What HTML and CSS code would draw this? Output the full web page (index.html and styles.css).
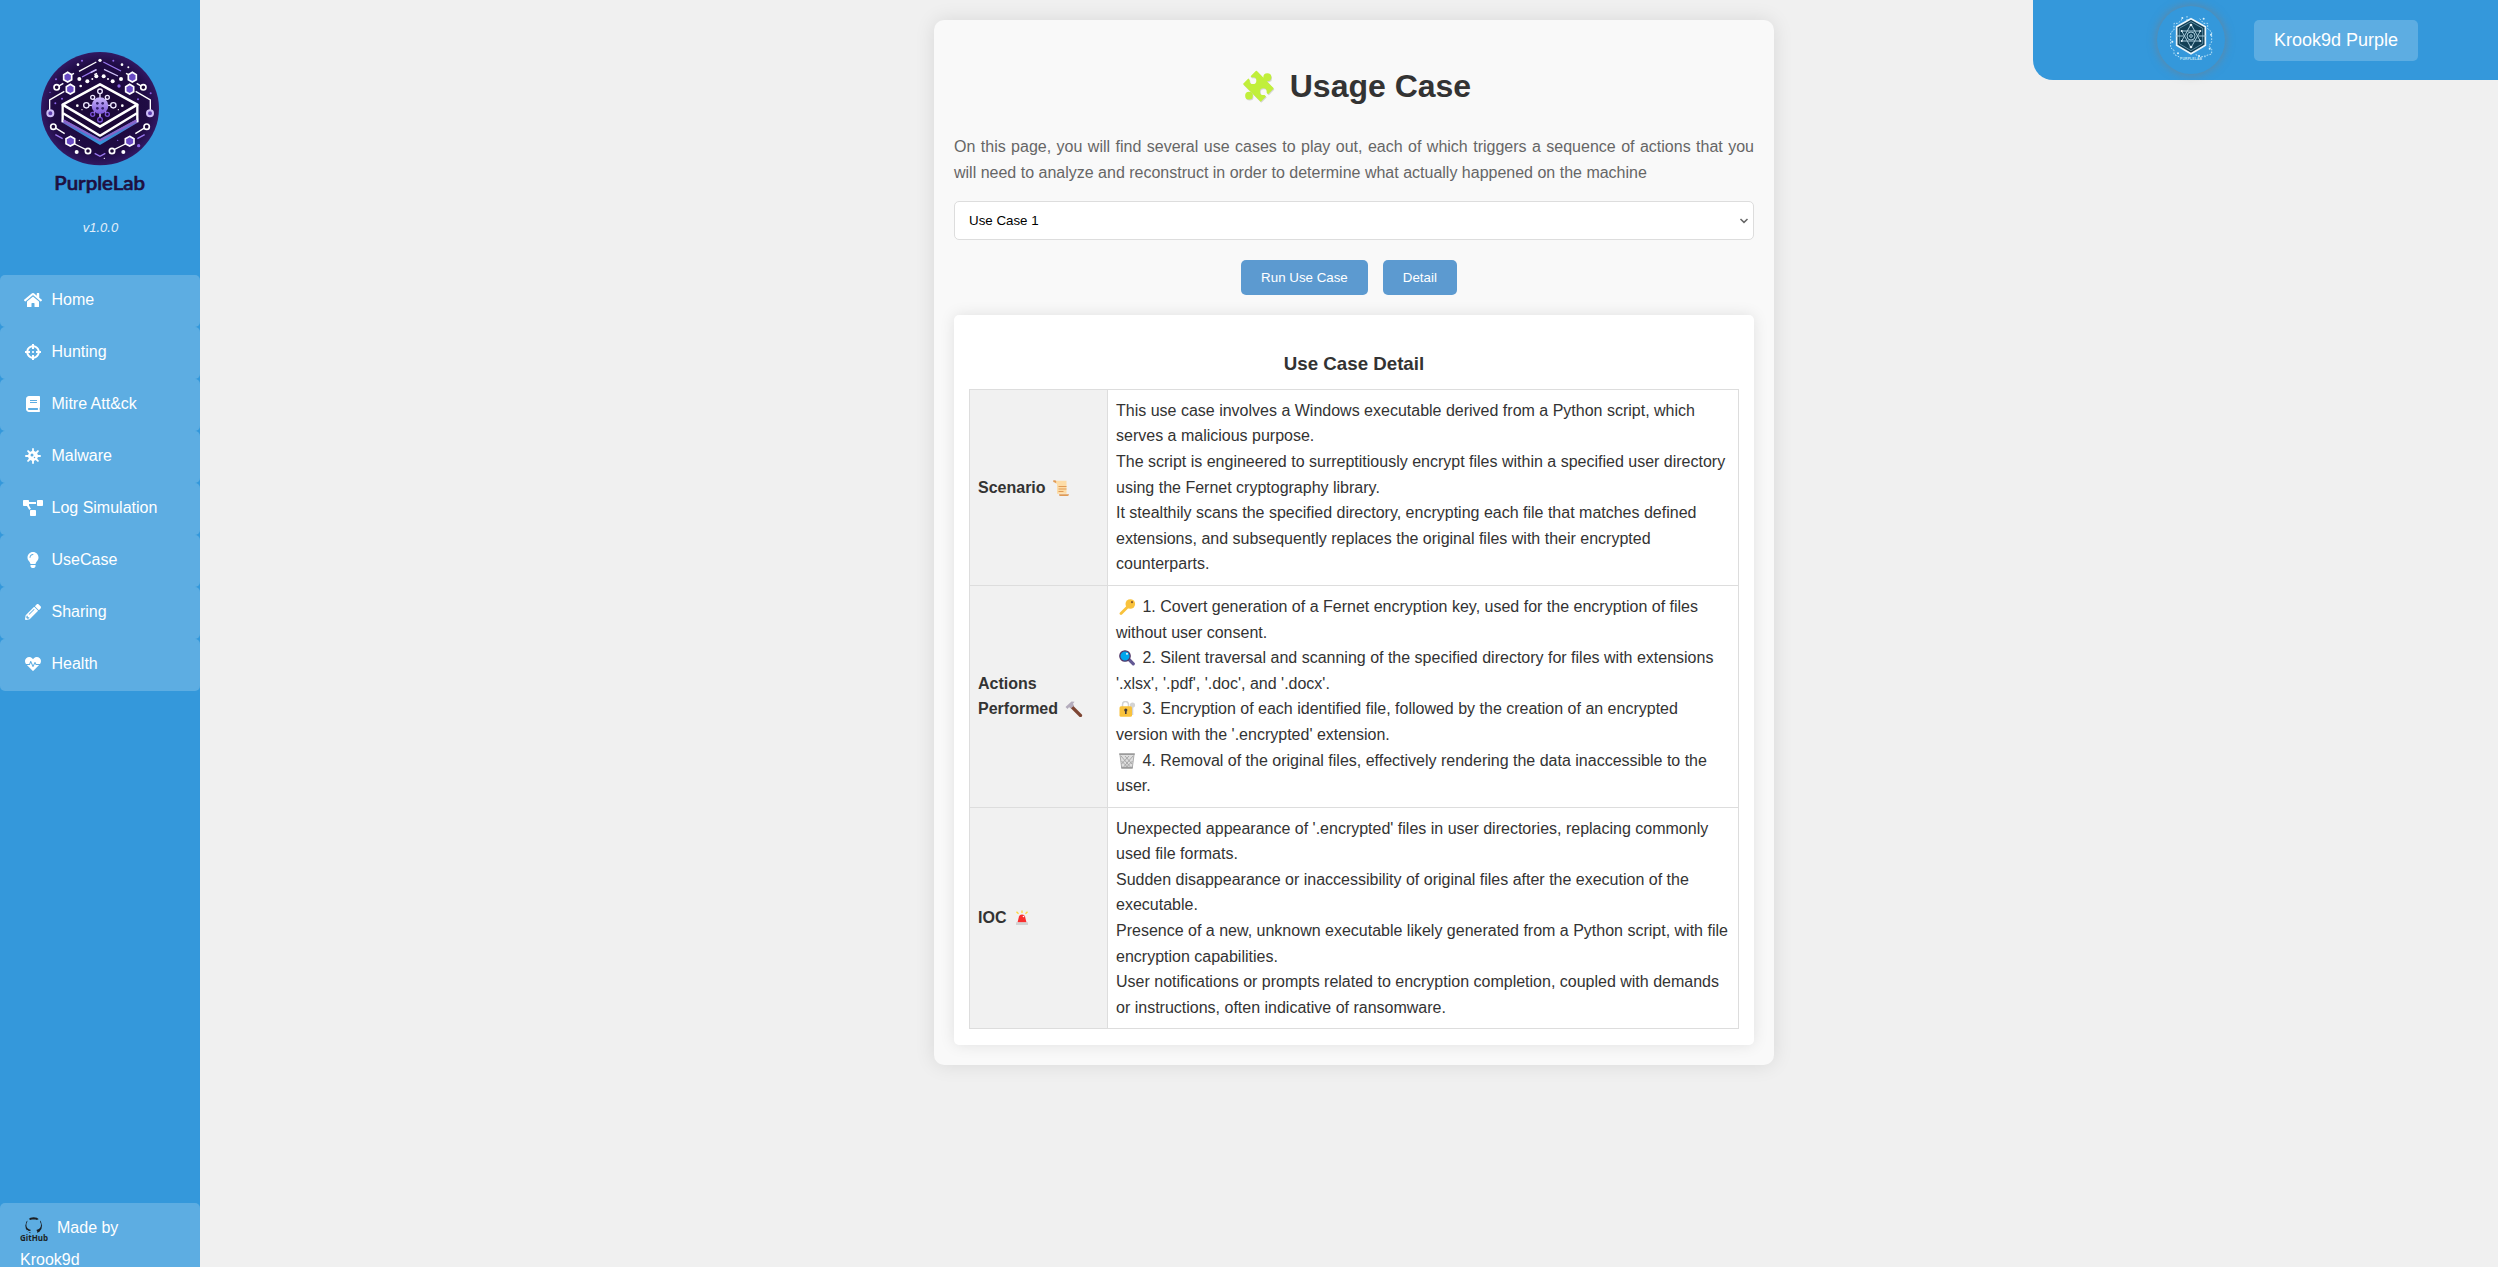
FILE: index.html
```html
<!DOCTYPE html>
<html lang="en">
<head>
<meta charset="utf-8">
<title>PurpleLab - Usage Case</title>
<link rel="stylesheet" href="styles.css">
</head>
<body>
<div class="app">
  <nav class="sidebar">
    <svg class="logo" viewBox="0 0 600 510">
      <defs>
        <radialGradient id="disc"><stop offset="0" stop-color="#190736"/><stop offset=".8" stop-color="#1f0b44"/><stop offset="1" stop-color="#311862"/></radialGradient>
        <linearGradient id="virus" x1="0" y1="0" x2="0" y2="1"><stop offset="0" stop-color="#c9b6f8"/><stop offset="1" stop-color="#7c55dc"/></linearGradient>
        <linearGradient id="layer" x1="0" y1="0" x2="0" y2="1"><stop offset="0" stop-color="#8a63cf"/><stop offset=".5" stop-color="#3f7fd0"/><stop offset="1" stop-color="#3498db"/></linearGradient>
      </defs>
      <ellipse cx="300" cy="236" rx="177" ry="170" fill="url(#disc)"/>
      <g fill="none" stroke="#fff" stroke-width="4">
        <path d="M237 124l52-28M283 134l8-4M170 172l20-12M430 172l-20-12M149 250v-40l44-26M451 250v-40l-44-26M160 290l34 21M440 290l-34 21M224 342l40 20M376 342l-40 20M214 134l8-4M386 134l-8-4"/>
        <path stroke="#9a78ee" d="M310 96l53 27M246 141l42-22M166 314l22 12M434 314l-22 12M284 370l16 9l16-9"/>
        <path stroke="#d3c6fa" d="M312 118l42 20M272 128l18-9"/>
      </g>
      <g fill="#6a4bc4" stroke="#fff" stroke-width="5">
        <path d="M203 127l12 7v15l-12 7l-12-7v-15zM397 127l12 7v15l-12 7l-12-7v-15zM211 163l12 7v15l-12 7l-12-7v-15zM389 163l12 7v15l-12 7l-12-7v-15zM211 319l13 7v15l-13 7l-13-7v-15zM389 319l13 7v15l-13 7l-13-7v-15z"/>
      </g>
      <g fill="#1b0838" stroke="#fff" stroke-width="5">
        <circle cx="170" cy="172" r="8"/><circle cx="430" cy="172" r="8"/>
        <circle cx="160" cy="290" r="8"/><circle cx="440" cy="290" r="8"/>
        <circle cx="264" cy="363" r="8"/><circle cx="336" cy="363" r="8"/>
      </g>
      <g fill="#6040b0" stroke="#cdbdf8" stroke-width="6"><circle cx="151" cy="250" r="9"/><circle cx="450" cy="250" r="9"/></g>
      <g fill="#fff">
        <circle cx="300" cy="91" r="5"/><circle cx="234" cy="104" r="4"/><circle cx="366" cy="104" r="4"/><circle cx="238" cy="147" r="6"/><circle cx="363" cy="147" r="6"/><circle cx="262" cy="154" r="6"/><circle cx="338" cy="154" r="6"/><circle cx="289" cy="139" r="6"/><circle cx="311" cy="139" r="6"/><circle cx="277" cy="147" r="3"/><circle cx="324" cy="147" r="3"/><circle cx="242" cy="168" r="4"/><circle cx="230" cy="366" r="6"/><circle cx="370" cy="366" r="6"/><circle cx="385" cy="112" r="3"/><circle cx="313" cy="385" r="2"/><circle cx="238" cy="331" r="2"/>
      </g>
      <g fill="#8b66e8"><circle cx="246" cy="92" r="3"/><circle cx="340" cy="92" r="3"/><circle cx="357" cy="168" r="5"/><circle cx="168" cy="148" r="3"/><circle cx="452" cy="190" r="3"/><circle cx="150" cy="187" r="2"/><circle cx="186" cy="206" r="3"/><circle cx="414" cy="208" r="3"/><circle cx="416" cy="347" r="5"/><circle cx="353" cy="331" r="2"/><circle cx="166" cy="220" r="3"/></g>
      <path fill="url(#layer)" d="M185 265l115 62l115-62v12l-115 68l-115-68z"/>
      <path d="M300 163l112 61v25l-112 66l-112-66v-25z" fill="#1b0838"/>
      <g fill="none" stroke="#fff" stroke-width="8" stroke-linejoin="round">
        <path d="M300 163l112 61l-112 66l-112-66z"/><path stroke-width="7" d="M188 224v53M412 224v53M188 249l112 68l112-68"/>
      </g>
      <path d="M190 271l110 60l110-60" fill="none" stroke="#8b63c9" stroke-width="6"/>
      <g stroke="#eee8ff" stroke-width="4" fill="#1b0838">
        <path d="M300 226v-40M300 226h40M300 226h-40M300 226v40M300 226l-22-23M300 226l22-23M300 226l-22 26M300 226l22 26"/>
        <circle cx="300" cy="184" r="7"/><circle cx="340" cy="226" r="8"/><circle cx="259" cy="226" r="8"/><circle cx="278" cy="202" r="6"/><circle cx="322" cy="202" r="6"/>
        <g stroke="#7a50d8"><circle cx="300" cy="269" r="7"/><circle cx="278" cy="253" r="6"/><circle cx="322" cy="253" r="6"/></g>
      </g>
      <circle cx="300" cy="227" r="25" fill="url(#virus)"/>
      <g fill="#33206c"><circle cx="292" cy="220" r="4"/><circle cx="308" cy="220" r="4"/><circle cx="292" cy="235" r="4"/><circle cx="308" cy="235" r="4"/></g>
      <g fill="#fff"><circle cx="232" cy="227" r="4"/><circle cx="367" cy="227" r="4"/><circle cx="246" cy="239" r="2"/><circle cx="355" cy="239" r="2"/></g>
      <text class="logo-name" x="163" y="479" textLength="272" lengthAdjust="spacingAndGlyphs">PurpleLab</text>
    </svg>
    <p class="version">v1.0.0</p>
    <ul class="menu">
      <li><svg class="icon" viewBox="0 0 576 512"><path d="M280.37 148.26L96 300.11V464a16 16 0 0 0 16 16l112.06-.29a16 16 0 0 0 15.92-16V368a16 16 0 0 1 16-16h64a16 16 0 0 1 16 16v95.64a16 16 0 0 0 16 16.05L464 480a16 16 0 0 0 16-16V300L295.67 148.26a12.19 12.19 0 0 0-15.3 0zM571.6 251.47L488 182.56V44.05a12 12 0 0 0-12-12h-56a12 12 0 0 0-12 12v72.61L318.47 43a48 48 0 0 0-61 0L4.34 251.47a12 12 0 0 0-1.6 16.9l25.5 31A12 12 0 0 0 45.15 301l235.22-193.74a12.19 12.19 0 0 1 15.3 0L530.9 301a12 12 0 0 0 16.9-1.6l25.5-31a12 12 0 0 0-1.7-16.93z"/></svg>Home</li>
      <li><svg class="icon" viewBox="0 0 512 512"><path d="M500 224h-30.364C455.724 130.325 381.675 56.276 288 42.364V12c0-6.627-5.373-12-12-12h-40c-6.627 0-12 5.373-12 12v30.364C130.325 56.276 56.276 130.325 42.364 224H12c-6.627 0-12 5.373-12 12v40c0 6.627 5.373 12 12 12h30.364C56.276 381.675 130.325 455.724 224 469.636V500c0 6.627 5.373 12 12 12h40c6.627 0 12-5.373 12-12v-30.364C381.675 455.724 455.724 381.675 469.636 288H500c6.627 0 12-5.373 12-12v-40c0-6.627-5.373-12-12-12zM288 404.634V364c0-6.627-5.373-12-12-12h-40c-6.627 0-12 5.373-12 12v40.634C165.826 392.232 119.783 346.243 107.366 288H148c6.627 0 12-5.373 12-12v-40c0-6.627-5.373-12-12-12h-40.634C119.768 165.826 165.757 119.783 224 107.366V148c0 6.627 5.373 12 12 12h40c6.627 0 12-5.373 12-12v-40.634C346.174 119.768 392.217 165.757 404.634 224H364c-6.627 0-12 5.373-12 12v40c0 6.627 5.373 12 12 12h40.634C392.232 346.174 346.243 392.217 288 404.634zM288 256c0 17.673-14.327 32-32 32s-32-14.327-32-32c0-17.673 14.327-32 32-32s32 14.327 32 32z"/></svg>Hunting</li>
      <li><svg class="icon" viewBox="0 0 448 512"><path d="M448 360V24c0-13.3-10.7-24-24-24H96C43 0 0 43 0 96v320c0 53 43 96 96 96h328c13.3 0 24-10.7 24-24v-16c0-7.5-3.5-14.3-8.9-18.7-4.2-15.4-4.2-59.3 0-74.7 5.4-4.3 8.9-11.1 8.9-18.6zM128 134c0-3.3 2.7-6 6-6h212c3.3 0 6 2.7 6 6v20c0 3.3-2.7 6-6 6H134c-3.3 0-6-2.7-6-6v-20zm0 64c0-3.3 2.7-6 6-6h212c3.3 0 6 2.7 6 6v20c0 3.3-2.7 6-6 6H134c-3.3 0-6-2.7-6-6v-20zm253.4 250H96c-17.7 0-32-14.3-32-32 0-17.6 14.4-32 32-32h285.4c-1.9 17.1-1.9 46.9 0 64z"/></svg>Mitre Att&amp;ck</li>
      <li><svg class="icon" viewBox="0 0 512 512"><path fill-rule="evenodd" d="M256 96a160 160 0 1 0 0 320a160 160 0 1 0 0-320zM224 176a48 48 0 1 1 0 96a48 48 0 1 1 0-96zM304 280a24 24 0 1 1 0 48a24 24 0 1 1 0-48z"/><path fill="none" stroke="#fff" stroke-width="58" stroke-linecap="round" d="M256 30v90M256 392v90M30 256h90M392 256h90M98 98l70 70M344 344l70 70M98 414l70-70M344 168l70-70"/></svg>Malware</li>
      <li><svg class="icon" viewBox="0 0 640 512"><path d="M384 320H256c-17.67 0-32 14.33-32 32v128c0 17.67 14.33 32 32 32h128c17.67 0 32-14.33 32-32V352c0-17.67-14.33-32-32-32zM192 32c0-17.67-14.33-32-32-32H32C14.33 0 0 14.33 0 32v128c0 17.67 14.33 32 32 32h95.72l73.16 128.04C211.98 300.98 232.4 288 256 288h.28L192 175.51V128h224V64H192V32zM608 0H480c-17.67 0-32 14.33-32 32v128c0 17.67 14.33 32 32 32h128c17.67 0 32-14.33 32-32V32c0-17.67-14.33-32-32-32z"/></svg>Log Simulation</li>
      <li><svg class="icon" viewBox="0 0 352 512"><path d="M96.06 454.35c.01 6.29 1.87 12.45 5.36 17.69l17.09 25.69a31.99 31.99 0 0 0 26.64 14.28h61.71a31.99 31.99 0 0 0 26.64-14.28l17.09-25.69a31.989 31.989 0 0 0 5.36-17.69l.04-38.35H96.01l.05 38.35zM0 176c0 44.37 16.45 84.85 43.56 115.78 16.52 18.85 42.36 58.23 52.21 91.45.04.26.07.52.11.78h160.24c.04-.26.07-.51.11-.78 9.85-33.22 35.69-72.6 52.21-91.45C335.55 260.85 352 220.37 352 176 352 78.61 272.91-.3 175.45 0 73.44.31 0 82.97 0 176zm176-80c-44.11 0-80 35.89-80 80 0 8.84-7.16 16-16 16s-16-7.16-16-16c0-61.76 50.24-112 112-112 8.84 0 16 7.16 16 16s-7.16 16-16 16z"/></svg>UseCase</li>
      <li><svg class="icon" viewBox="0 0 512 512"><path d="M497.9 142.1l-46.1 46.1c-4.7 4.7-12.3 4.7-17 0l-111-111c-4.7-4.7-4.7-12.3 0-17l46.1-46.1c18.7-18.7 49.1-18.7 67.9 0l60.1 60.1c18.8 18.7 18.8 49.1 0 67.9zM284.2 99.8L21.6 362.4.4 483.9c-2.9 16.4 11.4 30.6 27.8 27.8l121.5-21.3 262.6-262.6c4.7-4.7 4.7-12.3 0-17l-111-111c-4.8-4.7-12.4-4.7-17.1 0zM124.1 339.9c-5.5-5.5-5.5-14.3 0-19.8l154-154c5.5-5.5 14.3-5.5 19.8 0s5.5 14.3 0 19.8l-154 154c-5.5 5.5-14.3 5.5-19.8 0zM88 424h48v36.3l-64.5 11.3-31.1-31.1L51.7 376H88v48z"/></svg>Sharing</li>
      <li><svg class="icon" viewBox="0 0 512 512"><path d="M320.2 243.8l-49.7 99.4c-6 12.1-23.4 11.7-28.9-.6l-56.9-126.3-30 71.7H60.6l182.5 186.5c7.1 7.3 18.6 7.3 25.7 0L451.4 288H342.3l-22.1-44.2zM473.7 73.9l-2.4-2.5c-51.5-52.6-135.8-52.6-187.4 0L256 100l-27.9-28.5c-51.5-52.7-135.9-52.7-187.4 0l-2.4 2.4C-10.4 123.7-12.5 203 31 256h102.4l35.9-86.2c5.4-12.9 23.6-13.1 29.4-.4l58.2 129.3 49-97.9c5.9-11.8 22.7-11.8 28.6 0l27.6 55.2H481c43.5-53 41.4-132.3-7.3-182.1z"/></svg>Health</li>
    </ul>
    <div class="credits">
      <div class="credits-row">
        <svg class="github" viewBox="0 0 84 78">
          <circle cx="41" cy="26" r="25" fill="#1b1f23"/>
          <path fill="#5dade2" d="M31 53v-8c-7 1-10-3-12-7c5 0 6 4 9 4c2 0 4-1 5-3c-9-2-14-7-14-15c0-4 1-7 3-10c-1-3-1-6 0-9c4 0 7 2 9 4c6-2 14-2 20 0c3-2 6-4 9-4c1 3 1 6 0 9c2 3 3 6 3 10c0 8-5 13-14 15c2 2 3 4 3 7v8z"/>
          <text class="github-name" x="0" y="73" textLength="84" lengthAdjust="spacingAndGlyphs">GitHub</text>
        </svg>
        <span>Made by</span>
      </div>
      <div class="credits-author">Krook9d</div>
    </div>
  </nav>

  <main class="content">
    <header class="userbar">
      <div class="avatar">
        <svg viewBox="0 0 204 204">
          <g fill="none" stroke="#b9e2f7" stroke-width="3" stroke-dasharray="5 4">
            <path d="M75 40l-12 12h-12v20l-10 8v45l10 8v12l20 10M128 38l12 14h12v16l12 10v30l-8 12l8 10v14l-22 6M90 30v12M116 146l16 6h14"/>
          </g>
          <g fill="#d9f0fb"><circle cx="76" cy="36" r="3"/><circle cx="140" cy="38" r="3"/><circle cx="162" cy="86" r="3"/><circle cx="46" cy="107" r="3"/><circle cx="126" cy="150" r="3"/><circle cx="63" cy="142" r="3"/><circle cx="158" cy="128" r="3"/></g>
          <path d="M102 38l43 24v56l-43 25l-43-25v-56z" fill="#123f55" stroke="#eaf6fc" stroke-width="5"/>
          <path d="M102 47l35 20v46l-35 21l-35-21v-46z" fill="none" stroke="#7fb0c8" stroke-width="2"/>
          <g fill="none" stroke="#a5c8d8" stroke-width="3"><path d="M102 55l28 50h-56zM102 125l-28-50h56z"/><circle cx="102" cy="90" r="12"/><circle cx="102" cy="90" r="4"/><path d="M56 90h24M124 90h24"/></g>
          <g fill="#e6f4fb"><circle cx="102" cy="57" r="4"/><circle cx="102" cy="123" r="4"/><circle cx="74" cy="75" r="3"/><circle cx="130" cy="75" r="3"/><circle cx="74" cy="105" r="3"/><circle cx="130" cy="105" r="3"/></g>
          <text class="avatar-name" x="69" y="163" textLength="66">PURPLELAB</text>
        </svg>
      </div>
      <span class="username">Krook9d Purple</span>
    </header>

    <section class="card">
      <h1><svg class="puzzle" viewBox="0 0 132 96">
        <defs>
          <mask id="notches" maskUnits="userSpaceOnUse" x="0" y="0" width="132" height="100">
            <rect width="132" height="100" fill="#fff"/>
            <circle cx="48" cy="32" r="10"/><circle cx="79" cy="65" r="10"/>
            <path d="M36 20L46 32M94 80L80 66" stroke="#000" stroke-width="9"/>
          </mask>
          <g id="piece"><g mask="url(#notches)"><path stroke-width="5" stroke-linejoin="round" d="M58 5L21 42L71 92L107 55z"/></g><circle cx="91" cy="22" r="12" stroke="none"/><circle cx="36" cy="77" r="11.500" stroke="none"/></g>
        </defs>
        <use href="#piece" transform="translate(2 3)" fill="#d4d4d4" stroke="#d4d4d4"/><use href="#piece" fill="#c1ef3b" stroke="#c1ef3b"/></svg> Usage Case</h1>
      <p class="intro">On this page, you will find several use cases to play out, each of which triggers a sequence of actions that you will need to analyze and reconstruct in order to determine what actually happened on the machine</p>
      <div class="select"><span>Use Case 1</span><svg class="chevron" viewBox="0 0 10 6"><path d="M1.500 1l3.500 3.400l3.500-3.400"/></svg></div>
      <div class="actions"><button>Run Use Case</button><button>Detail</button></div>

      <div class="detail">
        <h3>Use Case Detail</h3>
        <table>
          <tr>
            <th>Scenario <svg class="emoji" viewBox="0 0 22 16"><path fill="#fddca6" d="M5 .8h11.500v13H7V4L5 3z"/><path fill="#e09a55" d="M3 .5q3-.8 3.300 1.200L6 3L3.400 2zM9 14.200h10q0 1.800-1.500 1.800H9.500z"/><path d="M8.500 6.500h8M8.500 9h8M8.500 11.500h5" stroke="#e09a55" stroke-width="1"/></svg></th>
            <td>This use case involves a Windows executable derived from a Python script, which serves a malicious purpose.<br>The script is engineered to surreptitiously encrypt files within a specified user directory using the Fernet cryptography library.<br>It stealthily scans the specified directory, encrypting each file that matches defined extensions, and subsequently replaces the original files with their encrypted counterparts.</td>
          </tr>
          <tr>
            <th>Actions Performed <svg class="emoji" viewBox="0 0 22 16"><path d="M9.500 5.500L18.500 14.500" stroke="#7d4533" stroke-width="3.200" stroke-linecap="round"/><path fill="#b4acbc" d="M3.500 6l6-5.500l3 .2l-1.500 2l1 2l-3 2.500l-2-1L5.500 8z"/></svg></th>
            <td><svg class="emoji" viewBox="0 0 22 16"><path d="M12 7.500L5 14.500" stroke="#f9c23c" stroke-width="2.800" stroke-linecap="round"/><circle cx="14.300" cy="5" r="4.800" fill="#f9c23c"/><circle cx="16" cy="3.200" r="1.100" fill="#8a5a2b"/></svg> 1. Covert generation of a Fernet encryption key, used for the encryption of files without user consent.<br><svg class="emoji" viewBox="0 0 22 16"><path d="M13 9.500l4.300 4.300" stroke="#635994" stroke-width="3.200" stroke-linecap="round"/><circle cx="9" cy="6" r="5.200" fill="#00a6ed" stroke="#533566" stroke-width="1.300"/><circle cx="11" cy="3.800" r="1.100" fill="#d5f1ff"/></svg> 2. Silent traversal and scanning of the specified directory for files with extensions '.xlsx', '.pdf', '.doc', and '.docx'.<br><svg class="emoji" viewBox="0 0 22 16"><path d="M6.500 6V3.500a3 3 0 0 1 6 0V6" fill="none" stroke="#d3d3d3" stroke-width="1.500"/><circle cx="16.500" cy="4" r="2.600" fill="#d3d3d3"/><path d="M15.800 6h1.500v8h-1.500z" fill="#d3d3d3"/><rect x="3.500" y="5.200" width="12.500" height="10.600" rx="1.500" fill="#f9c23c"/><circle cx="9.800" cy="9" r="1.600" fill="#433b3b"/><path d="M9 9h1.600v4H9z" fill="#433b3b"/></svg> 3. Encryption of each identified file, followed by the creation of an encrypted version with the '.encrypted' extension.<br><svg class="emoji" viewBox="0 0 22 16"><path fill="#dedede" d="M4 2h14l-1.500 12H5.500z"/><path fill="none" stroke="#9b9b9b" stroke-width=".8" d="M4 2l1.700 13M18 2l-1.700 13M5 3l9 10.500M9 3l7 8M5.500 8l6 6M17 3l-9 10.500M13 3l-7.500 8M16.500 8l-6 6"/><path fill="#9b9b9b" d="M3.200.3h15.600v1.600H3.200zM5.300 13.800h11.400v2H5.300z"/></svg> 4. Removal of the original files, effectively rendering the data inaccessible to the user.</td>
          </tr>
          <tr>
            <th>IOC <svg class="emoji" viewBox="0 0 22 16"><path fill="#f92f2f" d="M6.500 12.500l1.500-6q.5-2 3-2t3 2l1.500 6z"/><path fill="#d3d3d3" d="M5 12.300h12v2.700H5z"/><path d="M11 .5v2.500M5.500 1.800l2 2M16.500 1.800l-2 2" stroke="#fcd53f" stroke-width="1.300"/><circle cx="12.500" cy="6.500" r=".8" fill="#fff"/></svg></th>
            <td>Unexpected appearance of '.encrypted' files in user directories, replacing commonly used file formats.<br>Sudden disappearance or inaccessibility of original files after the execution of the executable.<br>Presence of a new, unknown executable likely generated from a Python script, with file encryption capabilities.<br>User notifications or prompts related to encryption completion, coupled with demands or instructions, often indicative of ransomware.</td>
          </tr>
        </table>
      </div>
    </section>
  </main>
</div>
</body>
</html>
```
FILE: styles.css
```css
* { box-sizing: border-box; }
body {
  margin: 0;
  font-family: "Liberation Sans", Arial, sans-serif;
  font-size: 16px;
  line-height: 1.6;
  color: #333;
  background: #f0f0f0;
}
.app {
  display: grid;
  grid-template-columns: 200px 1fr;
  height: 100vh;
  overflow: hidden;
}

/* Sidebar */
.sidebar {
  display: flex;
  flex-direction: column;
  height: 100vh;
  padding-top: 30px;
  background: #3498db;
  color: #fff;
  overflow: hidden;
}
.logo { display: block; flex: none; width: 200px; height: 170px; }
.logo-name { font: 500 58px Lato, sans-serif; fill: #1e0f40; stroke: #1e0f40; stroke-width: 2px; }
.version {
  margin: 17px 0 0;
  padding-left: 1px;
  height: 58px;
  font-size: 13px;
  line-height: 21px;
  font-style: italic;
  text-align: center;
  color: #e2effa;
}
.menu { list-style: none; margin: 0; padding: 0; }
.menu li {
  display: flex;
  align-items: center;
  gap: 9px;
  height: 52px;
  padding: 0 22.5px 2px;
  border-radius: 5px;
  background: #5dade2;
}
.icon { flex: none; width: 20px; height: 16px; fill: #fff; overflow: visible; }
.credits {
  flex: none;
  height: 64px;
  margin-top: auto;
  padding: 14px 20px 0;
  border-radius: 5px 5px 0 0;
  background: #5dade2;
  overflow: hidden;
}
.credits-row { display: flex; align-items: flex-start; gap: 9px; height: 29px; line-height: 22px; }
.github { width: 28px; height: 26px; }
.github-name { font: 700 25px "Open Sans", sans-serif; fill: #1b1f23; }
.credits-author { line-height: 28px; }

/* Main area: user bar and card share one grid cell */
.content { display: grid; height: 100vh; padding-left: 10px; }
.userbar {
  grid-area: 1 / 1;
  justify-self: end;
  align-self: start;
  display: flex;
  justify-content: flex-end;
  align-items: center;
  gap: 29px;
  width: 465px;
  height: 80px;
  padding-right: 80px;
  border-bottom-left-radius: 20px;
  background: #3498db;
}
.avatar {
  width: 68px;
  height: 68px;
  border-radius: 50%;
  box-shadow: 0 0 10px rgba(140, 120, 110, .6);
}
.avatar svg { display: block; width: 68px; height: 68px; }
.avatar-name { font: 700 10px "Liberation Sans", sans-serif; fill: #bfe3f5; }
.username {
  height: 41px;
  padding: 0 20px;
  border-radius: 5px;
  background: #5dade2;
  color: #fff;
  font-size: 18px;
  line-height: 40px;
}

.card {
  grid-area: 1 / 1;
  justify-self: center;
  align-self: start;
  width: 840px;
  height: 1045px;
  margin-top: 20px;
  padding: 20px;
  border-radius: 10px;
  background: #f9f9f9;
  box-shadow: 0 0 20px rgba(0, 0, 0, .1);
}
h1 { margin: 21.4px 0; font-size: 32px; text-align: center; white-space: nowrap; }
.puzzle { width: 44px; height: 32px; vertical-align: -5px; overflow: visible; }
.intro { margin: 0 0 16px; color: #666; text-align: justify; }
.select {
  display: flex;
  justify-content: space-between;
  align-items: center;
  height: 39px;
  padding: 0 4px 0 14px;
  border: 1px solid #ddd;
  border-radius: 5px;
  background: #fff;
  color: #000;
  font-size: 13.333px;
}
.chevron { width: 10px; height: 6px; fill: none; stroke: #666; stroke-width: 1.5; }
.actions { display: flex; justify-content: center; gap: 15px; margin: 20px 10px 20px 0; }
button {
  height: 35px;
  padding: 0 20px;
  border: 0;
  border-radius: 5px;
  background: #5c9ad0;
  color: #fff;
  font: 13.333px "Liberation Sans", Arial, sans-serif;
}
.detail {
  height: 730px;
  padding: 15px;
  border-radius: 5px;
  background: #fff;
  box-shadow: 0 0 15px rgba(0, 0, 0, .1);
}
h3 { margin: 18.7px 0 10px; font-size: 18.72px; text-align: center; }
table { width: 770px; border-collapse: collapse; table-layout: fixed; }
th, td { padding: 8px; border: 1px solid #ddd; text-align: left; }
th { width: 138px; background: #f1f1f1; }
.emoji { width: 22px; height: 16px; vertical-align: -3px; }
```
